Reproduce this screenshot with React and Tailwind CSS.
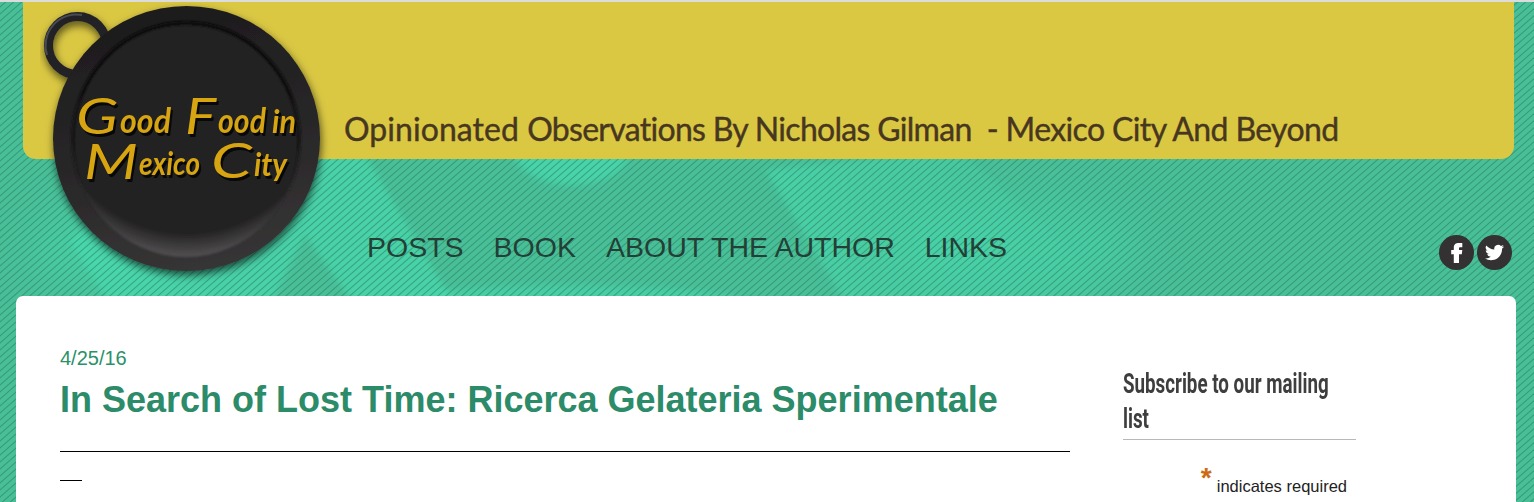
const nav = ["POSTS", "BOOK", "ABOUT THE AUTHOR", "LINKS"];

function Backdrop() {
  return (
    <svg className="absolute inset-0 h-full w-full" aria-hidden="true">
      <defs>
        <pattern id="stripes" width="8" height="7" patternUnits="userSpaceOnUse">
          <path d="M-2 8.75 L10 -1.75 M-2 1.75 L2 -1.75 M6 8.75 L10 5.25" stroke="#1d7059" strokeOpacity="0.45" strokeWidth="1.1" />
        </pattern>
        <filter id="soft"><feGaussianBlur stdDeviation="3" /></filter>
        <filter id="haze" x="-50%" y="-100%" width="200%" height="300%"><feGaussianBlur stdDeviation="22" /></filter>
        <linearGradient id="fade" x1="0" x2="1"><stop stopColor="#4ad9ac" /><stop offset="1" stopColor="#4ad9ac" stopOpacity="0" /></linearGradient>
      </defs>
      <rect width="1534" height="502" fill="#49bf98" />
      <ellipse cx="110" cy="250" rx="80" ry="40" fill="#4adcaf" opacity=".5" filter="url(#haze)" />
      <path d="M70 240 L200 130 H350 L455 305 H355 L305 235 L270 305 H110 Z" fill="#4adcaf" opacity=".65" filter="url(#soft)" />
      <ellipse cx="572" cy="150" rx="58" ry="35" fill="#4adcaf" opacity=".7" filter="url(#soft)" />
      <path d="M766 170 L850 310 H1130 L960 150 Z" fill="url(#fade)" opacity=".7" filter="url(#soft)" />
      <ellipse cx="570" cy="305" rx="180" ry="20" fill="#4adcaf" opacity=".5" filter="url(#soft)" />
      <ellipse cx="1020" cy="250" rx="120" ry="50" fill="#4adcaf" opacity=".45" filter="url(#haze)" />
      <rect width="1534" height="502" fill="url(#stripes)" />
    </svg>
  );
}

function Logo() {
  return (
    <svg viewBox="0 0 300 285" className="absolute top-0 left-10 h-[285px] w-[300px]" aria-label="Good Food in Mexico City">
      <defs>
        <linearGradient id="rim" x1="0.4" y1="0" x2="0.6" y2="1">
          <stop stopColor="#1d1c1d" /><stop offset=".5" stopColor="#272627" /><stop offset="1" stopColor="#373536" />
        </linearGradient>
        <radialGradient id="well" gradientUnits="userSpaceOnUse" cx="147" cy="95" r="163">
          <stop stopColor="#212021" /><stop offset=".84" stopColor="#212021" /><stop offset="1" stopColor="#555354" />
        </radialGradient>
        <linearGradient id="lip" x1="0" y1="0" x2="0" y2="1">
          <stop stopColor="#080808" /><stop offset=".5" stopColor="#171617" /><stop offset=".75" stopColor="#222" stopOpacity="0" />
        </linearGradient>
        <filter id="shadow" x="-20%" y="-20%" width="140%" height="140%"><feDropShadow dx="1" dy="4" stdDeviation="4" floodOpacity=".65" /></filter>
        <filter id="edge"><feGaussianBlur stdDeviation="1.2" /></filter>
      </defs>
      <g filter="url(#shadow)">
        <circle cx="37.5" cy="45.5" r="29" fill="none" stroke="#222327" strokeWidth="9" />
        <path d="M7 55 A31 31 0 0 1 42 15" fill="none" stroke="#62656e" strokeWidth="2" opacity=".6" />
        <ellipse cx="146.5" cy="138.5" rx="133.5" ry="132.5" fill="url(#rim)" />
      </g>
      <g filter="url(#edge)">
        <ellipse cx="146" cy="140" rx="113" ry="117" fill="url(#well)" />
        <ellipse cx="146" cy="140" rx="113" ry="117" fill="none" stroke="url(#lip)" strokeWidth="4" />
      </g>
      <g fill="#d7a512" fontFamily="Lato" fontStyle="italic" fontWeight="700" style={{ filter: "drop-shadow(2px 3px 0 #080808)" }}>
        <text x="36" y="134" fontSize="50" textLength="42" lengthAdjust="spacingAndGlyphs" fontWeight="400">G</text>
        <text x="80" y="133" fontSize="34" textLength="51" lengthAdjust="spacingAndGlyphs">ood</text>
        <text x="145" y="134" fontSize="50" textLength="31" lengthAdjust="spacingAndGlyphs" fontWeight="400">F</text>
        <text x="178" y="133" fontSize="34" textLength="48" lengthAdjust="spacingAndGlyphs">ood</text>
        <text x="232" y="133" fontSize="32" textLength="24" lengthAdjust="spacingAndGlyphs">in</text>
        <text x="44" y="179" fontSize="48" textLength="54" lengthAdjust="spacingAndGlyphs" fontWeight="400">M</text>
        <text x="99" y="175" fontSize="33" textLength="61" lengthAdjust="spacingAndGlyphs">exico</text>
        <text x="171" y="178" fontSize="48" textLength="41" lengthAdjust="spacingAndGlyphs" fontWeight="400">C</text>
        <text x="214" y="176" fontSize="33" textLength="33" lengthAdjust="spacingAndGlyphs">ity</text>
      </g>
    </svg>
  );
}

function Social() {
  return (
    <div className="flex gap-[3px]">
      <a aria-label="Facebook" className="flex size-[35px] items-center justify-center rounded-full bg-[#333132]">
        <svg viewBox="0 0 24 24" className="size-[24px]" fill="#fff"><path d="M8.800 22V13.300H6.200V9h2.600V6.500C8.800 3.300 10.800 2 14 2h3.300v4.200h-2c-1 0-1.300.5-1.300 1.200V9h3.300l-.5 4.300H14V22z" /></svg>
      </a>
      <a aria-label="Twitter" className="flex size-[35px] items-center justify-center rounded-full bg-[#333132]">
        <svg viewBox="0 0 24 24" className="size-[19px]" fill="#fff"><path d="M23.950 4.570a10 10 0 0 1-2.820.770 4.960 4.960 0 0 0 2.160-2.720c-.95.550-2 .950-3.130 1.180a4.920 4.920 0 0 0-8.380 4.480C7.690 8.100 4.070 6.130 1.640 3.160a4.920 4.920 0 0 0 1.520 6.570 4.900 4.900 0 0 1-2.230-.61v.06c0 2.380 1.700 4.370 3.950 4.820a5 5 0 0 1-2.210.09 4.940 4.940 0 0 0 4.600 3.420A9.870 9.870 0 0 1 0 19.540a14 14 0 0 0 7.550 2.210c9.050 0 14-7.500 14-13.980l-.02-.64a10 10 0 0 0 2.460-2.550z" /></svg>
      </a>
    </div>
  );
}

export default function App() {
  return (
    <div className="relative h-[502px] w-[1534px] overflow-hidden font-['Liberation_Sans',sans-serif]">
      <Backdrop />
      <div className="relative flex h-full flex-col border-t-2 border-[#dcdcdc]">
        <header className="ml-[23px] flex h-[157px] w-[1491px] items-end rounded-b-[13px] bg-[#dac843] pb-[10px] pl-[321px]">
          <h2 className="font-['Lato',sans-serif] text-[32px] leading-[40px] font-normal tracking-[-0.62px] whitespace-pre text-[#483720] [-webkit-text-stroke:0.4px_#483720]"><span className="tracking-[0.05px]">Opinionated </span><span className="tracking-[-0.7px]">Observations By Nicholas Gilman</span>{"  - Mexico City And Beyond"}</h2>
        </header>
        <div className="flex h-[137px] items-start justify-between pr-[22px] pl-[367px]">
          <nav className="flex gap-[30px] pt-[71px] text-[28.5px] leading-[34px] text-[#233f36]">
            {nav.map((item) => <a key={item}>{item}</a>)}
          </nav>
          <div className="pt-[76px]"><Social /></div>
        </div>
        <main className="ml-4 flex h-[206px] w-[1500px] rounded-t-[7px] bg-white pl-11">
          <article className="w-[1010px] pt-[50px]">
            <time className="block text-[20px] leading-[24px] text-[#2c9069]">4/25/16</time>
            <h1 className="pt-[8px] text-[36px] leading-[44px] font-bold whitespace-nowrap text-[#2c8b68]">In Search of Lost Time: Ricerca Gelateria Sperimentale</h1>
            <div className="mt-[29px] h-px bg-black" />
            <div className="mt-7 h-px w-[22px] bg-black" />
          </article>
          <aside className="ml-[53px] w-[233px] pt-[71px]">
            <h3 className="h-[73px] border-b border-[#b8b8b8] font-['Roboto',sans-serif] text-[27px] leading-[35px] font-bold text-[#3e3e3e]">
              <span className="block w-[340px] origin-left scale-x-[0.695] whitespace-nowrap">Subscribe to our mailing<br />list</span>
            </h3>
            <p className="flex justify-end gap-[5px] pt-[26px] pr-[9px] text-[16.5px] leading-[40px] whitespace-nowrap text-[#222]">
              <span className="-mt-[2px] text-[28px] leading-[28px] font-bold text-[#cc6b12]">*</span>indicates required
            </p>
          </aside>
        </main>
      </div>
      <Logo />
    </div>
  );
}
